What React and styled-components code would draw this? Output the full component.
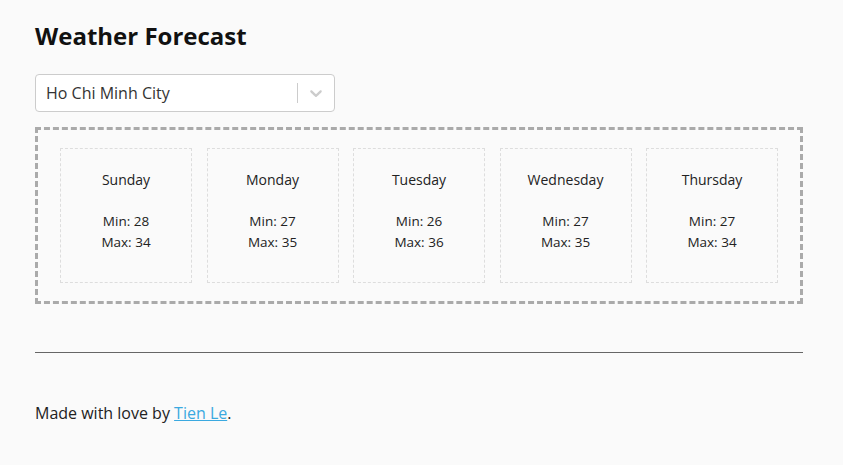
import React, { useState } from 'react';
import styled, { createGlobalStyle } from 'styled-components';

const GlobalStyle = createGlobalStyle`
    html, body {
        margin: 0;
        padding: 0;
        background-color: #fafafa;
        font-family: "Open Sans", "Noto Sans", sans-serif;
        color: #222;
    }
`;

const Page = styled.div`
    padding: 19px 40px 0 35px;
`;

const Title = styled.h1`
    margin: 0 0 22px;
    font-size: 24px;
    line-height: 33px;
    font-weight: 700;
    color: #111;
`;

const Select = styled.div`
    display: flex;
    align-items: center;
    box-sizing: border-box;
    width: 300px;
    height: 38px;
    border: 1px solid #ccc;
    border-radius: 4px;
    background-color: #fff;
`;

const SelectValue = styled.div`
    flex: 1;
    padding: 0 10px;
    font-size: 16px;
    color: #333;
`;

const Separator = styled.span`
    width: 1px;
    height: 20px;
    background-color: #ccc;
`;

const Indicator = styled.div`
    display: flex;
    align-items: center;
    padding: 8px;
    color: #ccc;
`;

const Forecast = styled.div`
    display: grid;
    grid-template-columns: repeat(5, 1fr);
    gap: 14.5px;
    margin-top: 15px;
    padding: 18px 22px;
    border: 3px dashed #aaa;
`;

const Card = styled.div`
    display: flex;
    flex-direction: column;
    align-items: center;
    height: 135px;
    box-sizing: border-box;
    padding-top: 21px;
    border: 1px dashed #ddd;
    color: #222;
`;

const Day = styled.div`
    font-size: 14px;
    line-height: 20px;
    margin-bottom: 21px;
`;

const Temp = styled.div`
    font-size: 13.5px;
    line-height: 21px;
`;

const Divider = styled.hr`
    margin: 48px 0 0;
    border: none;
    border-top: 1px solid #666;
`;

const Footer = styled.p`
    margin: 49px 0 0;
    font-size: 16px;
    line-height: 22px;
`;

const Link = styled.a`
    color: #3aa9e0;
    text-decoration: underline;
`;

const forecast = [
    { day: 'Sunday', min: 28, max: 34 },
    { day: 'Monday', min: 27, max: 35 },
    { day: 'Tuesday', min: 26, max: 36 },
    { day: 'Wednesday', min: 27, max: 35 },
    { day: 'Thursday', min: 27, max: 34 },
];

const Chevron = () => (
    <svg width="20" height="20" viewBox="0 0 20 20" fill="currentColor">
        <path d="M4.516 7.548c0.436-0.446 1.043-0.481 1.576 0l3.908 3.747 3.908-3.747c0.533-0.481 1.141-0.446 1.574 0 0.436 0.445 0.408 1.197 0 1.615-0.406 0.418-4.695 4.502-4.695 4.502-0.217 0.223-0.502 0.335-0.787 0.335s-0.57-0.112-0.789-0.335c0 0-4.287-4.084-4.695-4.502s-0.436-1.170 0-1.615z" />
    </svg>
);

const App = () => {
    const [city] = useState('Ho Chi Minh City');

    return (
        <Page>
            <GlobalStyle />
            <Title>Weather Forecast</Title>
            <Select>
                <SelectValue>{city}</SelectValue>
                <Separator />
                <Indicator>
                    <Chevron />
                </Indicator>
            </Select>
            <Forecast>
                {forecast.map((item) => (
                    <Card key={item.day}>
                        <Day>{item.day}</Day>
                        <Temp>Min: {item.min}</Temp>
                        <Temp>Max: {item.max}</Temp>
                    </Card>
                ))}
            </Forecast>
            <Divider />
            <Footer>
                Made with love by <Link href="#">Tien Le</Link>.
            </Footer>
        </Page>
    );
};

export default App;
